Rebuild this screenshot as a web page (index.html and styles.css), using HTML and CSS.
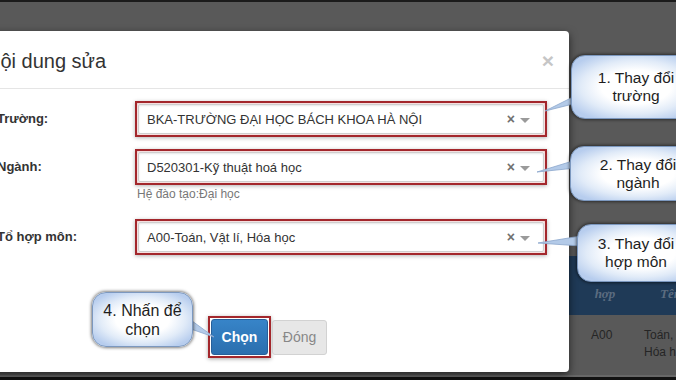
FILE: index.html
```html
<!DOCTYPE html>
<html lang="vi">
<head>
<meta charset="utf-8">
<title>Nội dung sửa</title>
<link rel="stylesheet" href="styles.css">
</head>
<body>
<div class="frame-top"></div>
<div class="page">
  <div class="bg-table">
    <div class="bg-head"><div class="c1">hợp</div><div class="c2">Tên</div></div>
    <div class="bg-row"><div class="c1">A00</div><div class="c2">Toán,<br>Hóa h</div></div>
  </div>
</div>
<div class="frame-bottom"></div>

<div class="modal">
  <div class="modal-header">
    <h4 class="modal-title">Nội dung sửa</h4>
    <span class="close">×</span>
  </div>
  <div class="modal-body">
    <div class="field">
      <div class="label">Trường:</div>
      <div class="ctl">
        <div class="hl"><div class="sel"><span class="val">BKA-TRƯỜNG ĐẠI HỌC BÁCH KHOA HÀ NỘI</span><span class="clear">×</span><span class="caret"></span></div></div>
      </div>
    </div>
    <div class="field">
      <div class="label">Ngành:</div>
      <div class="ctl">
        <div class="hl"><div class="sel"><span class="val">D520301-Kỹ thuật hoá học</span><span class="clear">×</span><span class="caret"></span></div></div>
        <div class="hint">Hệ đào tạo:Đại học</div>
      </div>
    </div>
    <div class="field field-last">
      <div class="label">Tổ hợp môn:</div>
      <div class="ctl">
        <div class="hl"><div class="sel"><span class="val">A00-Toán, Vật lí, Hóa học</span><span class="clear">×</span><span class="caret"></span></div></div>
      </div>
    </div>
  </div>
  <div class="modal-footer">
    <div class="btn-hl"><button class="btn btn-primary">Chọn</button></div>
    <button class="btn btn-default">Đóng</button>
  </div>
</div>

<svg class="tails" width="676" height="380" viewBox="0 0 676 380">
  <polygon points="545,111 577,95 577,103"/>
  <polygon points="537,172 576,160 576,168"/>
  <polygon points="538,243 581,236 581,246"/>
  <polygon points="188,318 188,328 214,337"/>
</svg>

<div class="bubble b1">1. Thay đổi<br>trường</div>
<div class="bubble b2">2. Thay đổi<br>ngành</div>
<div class="bubble b3">3. Thay đổi<br>hợp môn</div>
<div class="bubble b4">4. Nhấn để<br>chọn</div>
</body>
</html>
```
FILE: styles.css
```css
html, body {
  margin: 0;
  padding: 0;
}
body {
  width: 676px;
  height: 380px;
  overflow: hidden;
  position: relative;
  display: flex;
  flex-direction: column;
  font-family: "Liberation Sans", Arial, sans-serif;
  background: #595959;
}
.frame-top {
  height: 2px;
  background: #1b1b1b;
  flex: none;
}
.page {
  height: 373px;
  flex: none;
  background: #595959;
  overflow: hidden;
}
.frame-bottom {
  height: 2px;
  flex: none;
  background: #686868;
  border-bottom: 3px solid #121212;
}
.bg-table {
  margin: 254px 0 0 569px;
  width: 200px;
}
.bg-head {
  height: 59px;
  background: #1f3a57;
  display: flex;
  align-items: center;
  font-family: "Liberation Serif", serif;
  font-style: italic;
  font-weight: bold;
  font-size: 13px;
  color: #5b6c80;
  padding-top: 16px;
  box-sizing: border-box;
}
.bg-head .c1 {
  width: 72px;
  text-align: center;
}
.bg-head .c2 {
  padding-left: 19px;
}
.bg-row {
  height: 57px;
  display: flex;
  font-size: 12px;
  line-height: 17px;
  color: #252525;
  padding-top: 12px;
  box-sizing: border-box;
}
.bg-row .c1 {
  width: 75px;
  padding-left: 22px;
  box-sizing: border-box;
}
.bg-row .c2 {
  white-space: nowrap;
}

/* modal */
.modal {
  position: absolute;
  left: -30px;
  top: 31px;
  width: 599px;
  height: 341px;
  background: #fff;
  border-radius: 4px;
  box-shadow: 0 3px 8px rgba(0, 0, 0, 0.6);
  z-index: 1;
}
.modal-header {
  display: flex;
  justify-content: space-between;
  align-items: center;
  padding: 19px 15px 16px 16px;
  border-bottom: 1px solid #e5e5e5;
}
.modal-title {
  margin: 0;
  font-size: 20px;
  line-height: 22px;
  font-weight: normal;
  color: #333;
}
.close {
  font-size: 21px;
  font-weight: bold;
  line-height: 22px;
  color: #c6c6c6;
}
.modal-body {
  padding: 12px 22px 0 27px;
}
.field {
  display: flex;
  align-items: flex-start;
  margin-bottom: 12px;
}
.field + .field {
  margin-bottom: 18px;
}
.field.field-last {
  margin-bottom: 0;
}
.label {
  width: 138px;
  flex: none;
  line-height: 36px;
  font-size: 13px;
  font-weight: bold;
  color: #333;
}
.ctl {
  width: 412px;
  flex: none;
}
.hl {
  height: 36px;
  box-sizing: border-box;
  border: 2px solid #a3272c;
  padding: 1px;
  box-shadow: 0 1px 4px rgba(0, 0, 0, 0.3), inset 0 0 3px rgba(200, 90, 90, 0.55);
}
.sel {
  height: 30px;
  box-sizing: border-box;
  border: 1px solid #cfcfcf;
  border-radius: 2px;
  background: #fff;
  box-shadow: inset 0 1px 2px rgba(0, 0, 0, 0.1);
  display: flex;
  align-items: center;
  padding: 0 13px 0 8px;
  font-size: 13px;
  color: #333;
}
.val {
  flex: 1;
  white-space: nowrap;
}
.clear {
  font-size: 14px;
  font-weight: bold;
  color: #707070;
  margin-right: 5px;
  line-height: 14px;
}
.caret {
  width: 0;
  height: 0;
  border-left: 5px solid transparent;
  border-right: 5px solid transparent;
  border-top: 5px solid #9a9a9a;
  margin-top: 2px;
}
.hint {
  margin-top: 2px;
  padding-left: 2px;
  font-size: 12px;
  line-height: 14px;
  color: #777;
}
.modal-footer {
  display: flex;
  align-items: center;
  padding: 61px 0 0 238px;
}
.btn-hl {
  border: 2px solid #a3272c;
  padding: 1px;
  box-shadow: 0 1px 4px rgba(0, 0, 0, 0.35);
}
.btn {
  font-family: "Liberation Sans", Arial, sans-serif;
  border-radius: 3px;
  padding: 0;
  display: flex;
  align-items: center;
  justify-content: center;
}
.btn-primary {
  width: 57px;
  height: 36px;
  background: linear-gradient(#3784c8, #2b6fae);
  border: 1px solid #27609a;
  color: #fff;
  font-size: 14px;
  font-weight: bold;
}
.btn-default {
  width: 55px;
  height: 35px;
  margin-left: 1px;
  background: #e7e7e7;
  border: 1px solid #d2d2d2;
  color: #878787;
  font-size: 14px;
}

/* callouts */
.tails {
  position: absolute;
  left: 0;
  top: 0;
  z-index: 2;
}
.tails polygon {
  fill: #b3cae8;
  stroke: #8aa6cb;
  stroke-width: 0.8;
}
.bubble {
  position: absolute;
  z-index: 3;
  box-sizing: border-box;
  display: flex;
  align-items: center;
  justify-content: center;
  text-align: center;
  white-space: nowrap;
  font-size: 15.5px;
  line-height: 18px;
  color: #1e1e1e;
  border: 1px solid #7c98bf;
  border-radius: 14px;
  background: radial-gradient(ellipse 60% 60% at 50% 50%, #ffffff 45%, #e1ebf8 72%, #b7cdee 100%);
  box-shadow: 0 0 3px 1px rgba(0, 0, 0, 0.5);
}
.b1 {
  left: 571px;
  top: 55px;
  width: 130px;
  height: 64px;
}
.b2 {
  left: 570px;
  top: 146px;
  width: 136px;
  height: 55px;
}
.b3 {
  left: 577px;
  top: 224px;
  width: 128px;
  height: 58px;
  padding-right: 10px;
}
.b4 {
  left: 92px;
  top: 292px;
  width: 101px;
  height: 55px;
  font-size: 16px;
  line-height: 19px;
}
```
